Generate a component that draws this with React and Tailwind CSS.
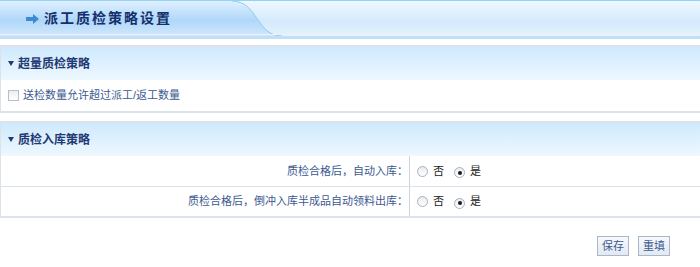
import React from 'react';

const Radio = ({ checked }) => (
  <span className="inline-flex items-center justify-center w-[11px] h-[11px] rounded-full border border-[#a9b1bd] bg-gradient-to-b from-[#e9ecf0] to-white">
    {checked && <span className="w-[4px] h-[4px] rounded-full bg-[#1b1b1b]" />}
  </span>
);

const PanelHead = ({ title }) => (
  <div className="h-[33px] flex items-center pl-[7px] gap-[4px] bg-gradient-to-b from-[#cfe9fd] to-[#eef8ff]">
    <span className="w-0 h-0 border-l-[3px] border-r-[3px] border-t-[5px] border-l-transparent border-r-transparent border-t-[#1f3a73]" />
    <span className="text-[12px] font-bold text-[#1f3a73]">{title}</span>
  </div>
);

const Row = ({ label, last }) => (
  <div className={`flex h-[31px] ${last ? 'border-b-2' : 'border-b'} border-[#dde3ec]`}>
    <div className="w-[409px] shrink-0 flex items-center justify-end pr-[1px] border-r border-[#c9d3e2] text-[11px] text-[#3c5a90]">
      {label}
    </div>
    <div className="flex items-center pl-[7px] text-[11px] text-[#222]">
      <Radio />
      <span className="ml-[5px]">否</span>
      <span className="ml-[10px]"><Radio checked /></span>
      <span className="ml-[5px]">是</span>
    </div>
  </div>
);

export default function App() {
  return (
    <div className="w-[700px] h-[267px] bg-white font-['Liberation_Sans','Noto_Sans_CJK_SC',sans-serif] overflow-hidden">
      {/* page title bar */}
      <div className="relative h-[39px] border-t border-[#96d2f5]">
        <svg className="absolute inset-0" width="700" height="38" viewBox="0 0 700 38" preserveAspectRatio="none">
          <defs>
            <linearGradient id="gr" x1="0" y1="0" x2="0" y2="1">
              <stop offset="0" stopColor="#eef8ff" />
              <stop offset="0.55" stopColor="#d3eafc" />
              <stop offset="1" stopColor="#e8f5fe" />
            </linearGradient>
            <linearGradient id="gl" x1="0" y1="0" x2="0" y2="1">
              <stop offset="0" stopColor="#dff0fe" />
              <stop offset="0.55" stopColor="#b0d7f9" />
              <stop offset="1" stopColor="#d0e8fc" />
            </linearGradient>
          </defs>
          <rect x="0" y="0" width="700" height="38" fill="url(#gr)" />
          <path d="M0,0 L232,0 C258,0 256,35 282,35 L0,35 Z" fill="url(#gl)" />
          <path d="M232,0 C258,0 256,35 282,35" fill="none" stroke="#93c9f0" strokeWidth="1" />
          <rect x="0" y="33" width="700" height="1" fill="#f3eef2" />
          <rect x="0" y="35" width="700" height="3" fill="#bfe0f8" />
        </svg>
        <div className="relative h-[35px] flex items-center pl-[26px] gap-[5px]">
          <svg width="13" height="10" viewBox="0 0 13 10">
            <path d="M0,3 L7,3 L7,0 L13,5 L7,10 L7,7 L0,7 Z" fill="#3d8bd1" />
          </svg>
          <span className="text-[14px] font-bold tracking-[2px] text-[#13306e]">派工质检策略设置</span>
        </div>
      </div>

      {/* over-quantity strategy */}
      <div className="mt-[6px] border-t-2 border-b-2 border-l border-[#dce2ea]">
        <PanelHead title="超量质检策略" />
        <div className="h-[31px] flex items-center pl-[7px] gap-[4px] text-[11px] text-[#3c5a90]">
          <span className="w-[11px] h-[11px] border border-[#b9bfc9] bg-gradient-to-b from-[#eceef1] to-white" />
          <span>送检数量允许超过派工/返工数量</span>
        </div>
      </div>

      {/* inbound strategy */}
      <div className="mt-[8px] border-t-2 border-l border-[#dce2ea]">
        <PanelHead title="质检入库策略" />
        <Row label="质检合格后，自动入库：" />
        <Row label="质检合格后，倒冲入库半成品自动领料出库：" last />
      </div>

      <div className="flex justify-end gap-[9px] pr-[30px] mt-[18px]">
        <button className="h-[20px] px-[4px] border border-[#aab6cc] bg-gradient-to-b from-[#f7f9fc] to-[#e3e9f2] text-[11px] text-[#3c5a90] leading-none">保存</button>
        <button className="h-[20px] px-[4px] border border-[#aab6cc] bg-gradient-to-b from-[#f7f9fc] to-[#e3e9f2] text-[11px] text-[#3c5a90] leading-none">重填</button>
      </div>
    </div>
  );
}
